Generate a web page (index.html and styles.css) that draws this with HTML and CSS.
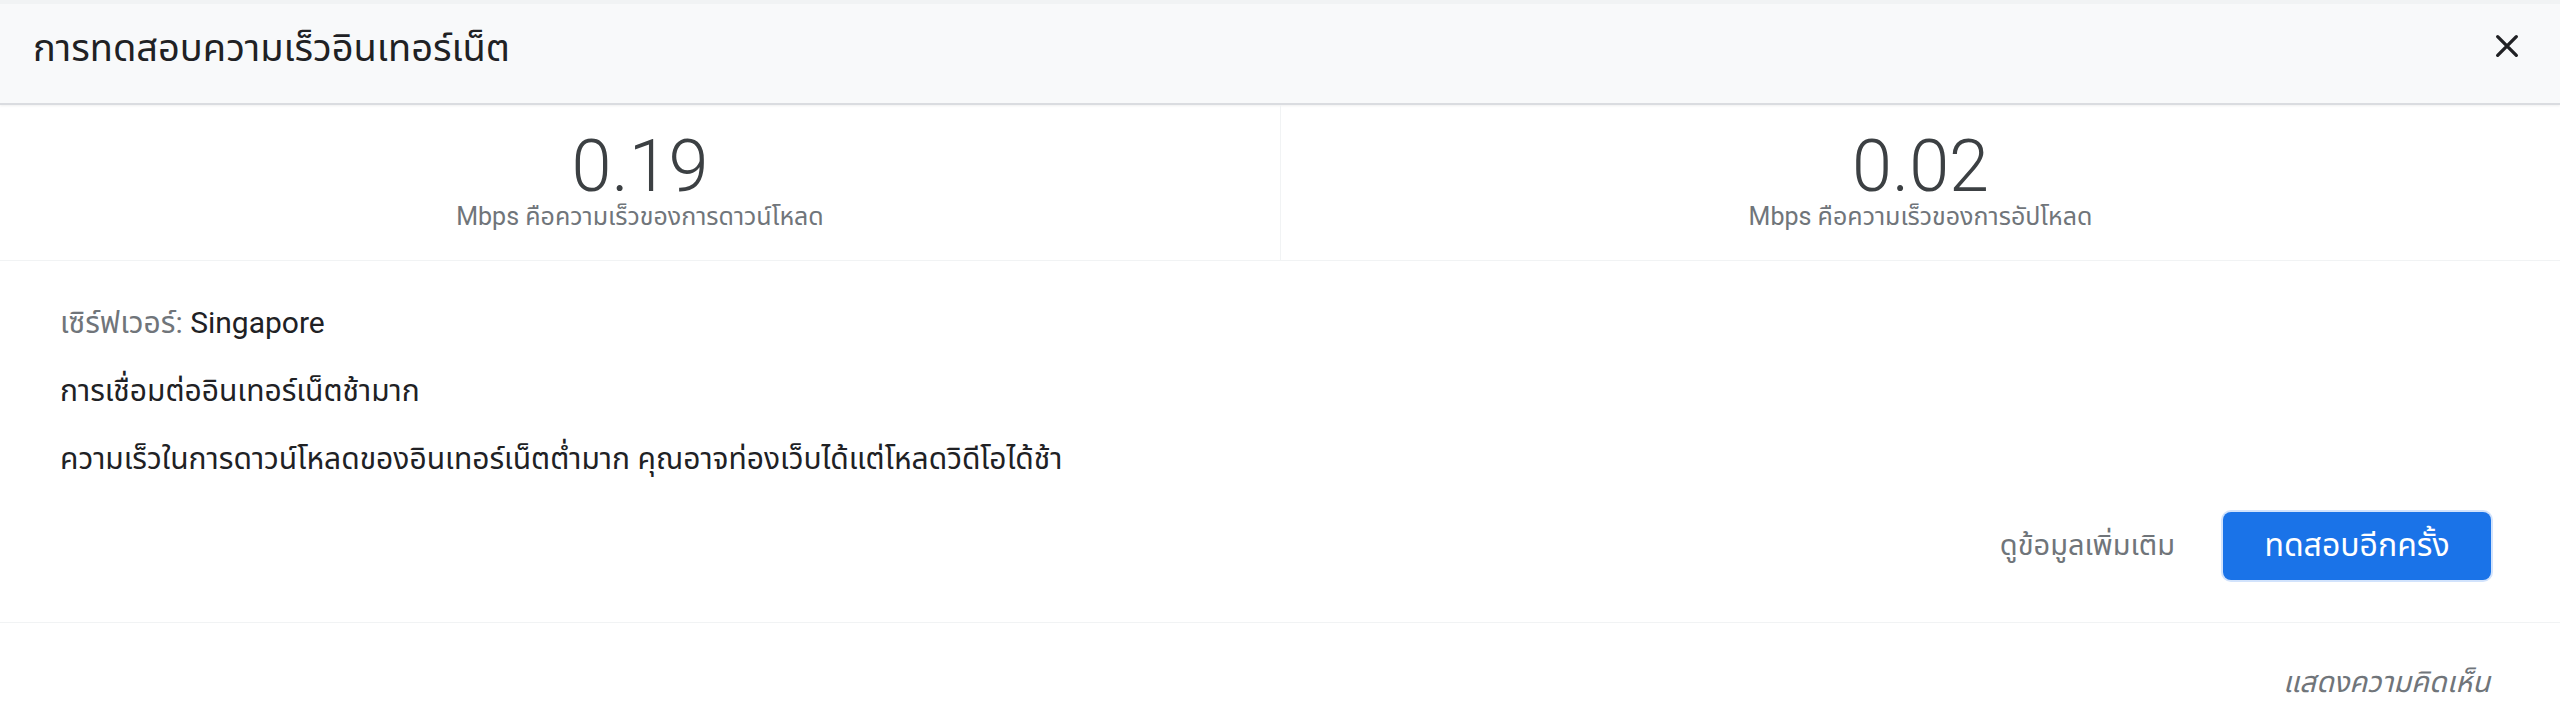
FILE: index.html
```html
<!DOCTYPE html>
<html lang="th">
<head>
<meta charset="utf-8">
<title>การทดสอบความเร็วอินเทอร์เน็ต</title>
<link rel="stylesheet" href="styles.css">
</head>
<body>
<div class="dialog">
  <header class="header">
    <h1 class="title">การทดสอบความเร็วอินเทอร์เน็ต</h1>
    <button class="close" aria-label="ปิด">
      <svg viewBox="0 0 24 24" width="32" height="32"><path d="M5 5 L19 19 M19 5 L5 19" stroke="#202124" stroke-width="2.5" stroke-linecap="round" fill="none"/></svg>
    </button>
  </header>
  <section class="stats">
    <div class="stat">
      <div class="num">0.19</div>
      <div class="label">Mbps คือความเร็วของการดาวน์โหลด</div>
    </div>
    <div class="stat">
      <div class="num">0.02</div>
      <div class="label">Mbps คือความเร็วของการอัปโหลด</div>
    </div>
  </section>
  <section class="info">
    <p class="line"><span class="muted">เซิร์ฟเวอร์:</span> Singapore</p>
    <p class="line">การเชื่อมต่ออินเทอร์เน็ตช้ามาก</p>
    <p class="line">ความเร็วในการดาวน์โหลดของอินเทอร์เน็ตต่ำมาก คุณอาจท่องเว็บได้แต่โหลดวิดีโอได้ช้า</p>
    <div class="actions">
      <a class="more">ดูข้อมูลเพิ่มเติม</a>
      <button class="retry">ทดสอบอีกครั้ง</button>
    </div>
  </section>
  <footer class="footer">
    <a class="feedback">แสดงความคิดเห็น</a>
  </footer>
</div>
</body>
</html>
```
FILE: styles.css
```css
html, body {
  margin: 0;
  padding: 0;
  background: #ffffff;
}
body {
  font-family: Roboto, "Noto Sans Thai", "Noto Sans", sans-serif;
  color: #202124;
}
.dialog {
  width: 2560px;
  height: 721px;
  overflow: hidden;
}
.header {
  height: 99px;
  border-top: 4px solid #f1f3f4;
  border-bottom: 2px solid #dadce0;
  background: #f8f9fa;
  display: flex;
  align-items: center;
  justify-content: space-between;
  padding: 0 36px 0 33px;
  box-shadow: 0 1px 2px rgba(60,64,67,0.08);
}
.title {
  margin: 0;
  font-size: 38px;
  font-weight: 400;
  color: #202124;
  margin-top: -8px;
}
.close {
  border: 0;
  background: transparent;
  padding: 0;
  width: 34px;
  height: 34px;
  display: flex;
  align-items: center;
  justify-content: center;
  margin-top: -16px;
}
.stats {
  display: grid;
  grid-template-columns: 1fr 1fr;
  border-bottom: 1px solid #f1f3f4;
}
.stat {
  text-align: center;
  padding: 30px 0 29px;
}
.stat + .stat {
  border-left: 1px solid #f1f3f4;
}
.num {
  font-size: 72px;
  font-weight: 300;
  line-height: 64px;
  color: #3c4043;
}
.label {
  font-size: 25px;
  line-height: 28px;
  margin-top: 4px;
  color: #70757a;
}
.info {
  padding: 42px 69px 42px 60px;
  border-bottom: 1px solid #f1f3f4;
}
.line {
  margin: 0 0 28px;
  font-size: 30px;
  line-height: 40px;
  color: #202124;
}
.muted {
  color: #70757a;
}
.actions {
  display: flex;
  justify-content: flex-end;
  align-items: center;
  gap: 48px;
  margin-top: 33px;
}
.more {
  font-size: 29px;
  color: #70757a;
}
.retry {
  width: 268px;
  height: 68px;
  border: 0;
  border-radius: 8px;
  background: #1a73e8;
  color: #ffffff;
  font-family: inherit;
  font-size: 32px;
  box-shadow: 0 0 0 2px #d2e3fc;
}
.footer {
  display: flex;
  justify-content: flex-end;
  padding: 38px 70px 0 0;
}
.feedback {
  font-size: 29px;
  font-style: italic;
  color: #70757a;
}
```
